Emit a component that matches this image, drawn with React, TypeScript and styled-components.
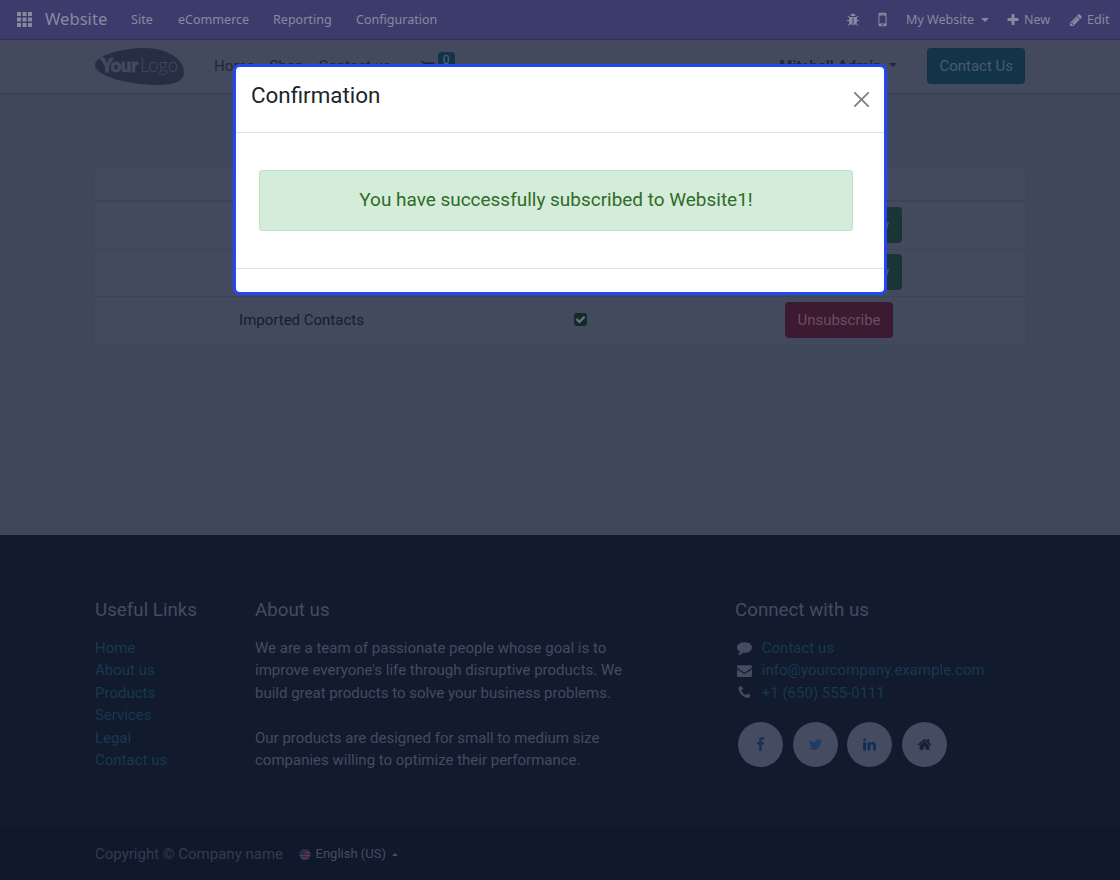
import React from 'react';
import styled, { createGlobalStyle } from 'styled-components';

const GlobalStyle = createGlobalStyle`
  * { box-sizing: border-box; }
  html, body { margin: 0; padding: 0; }
  body {
    width: 1120px;
    height: 880px;
    overflow: hidden;
    background: #3f475a;
    font-family: Roboto, "Liberation Sans", sans-serif;
    font-size: 15px;
    line-height: 22.5px;
    color: #151c30;
  }
`;

const paths = {
  plus: 'M1600 736v192q0 40-28 68t-68 28h-416v416q0 40-28 68t-68 28h-192q-40 0-68-28t-28-68v-416h-416q-40 0-68-28t-28-68v-192q0-40 28-68t68-28h416v-416q0-40 28-68t68-28h192q40 0 68 28t28 68v416h416q40 0 68 28t28 68z',
  pencil: 'M491 1536l91-91-235-235-91 91v107h128v128h107zm523-928q0-22-22-22-10 0-17 7l-542 542q-7 7-7 17 0 22 22 22 10 0 17-7l542-542q7-7 7-17zm-54-192l416 416-832 832h-416v-416zm683 96q0 53-37 90l-166 166-416-416 166-165q36-38 90-38 53 0 91 38l235 234q37 39 37 91z',
  twitter: 'M1684 408q-67 98-162 167 1 14 1 42 0 130-38 259.5t-115.5 248.5-184.5 210.5-258 146-323 54.5q-271 0-496-145 35 4 78 4 225 0 401-138-105-2-188-64.5t-114-159.5q33 5 61 5 43 0 85-11-112-23-185.5-111.5t-73.5-205.5v-4q68 38 146 41-66-44-105-115t-39-154q0-88 44-163 121 149 294.5 238.5t371.5 99.5q-8-38-8-74 0-134 94.5-228.5t228.5-94.5q140 0 236 102 109-21 205-78-37 115-142 178 93-10 186-50z',
  facebook: 'M1343 12v264h-157q-86 0-116 36t-30 108v189h293l-39 296h-254v759h-306v-759h-255v-296h255v-218q0-186 104-288.5t277-102.5q147 0 228 12z',
  linkedin: 'M477 625v991h-330v-991h330zm21-306q1 73-50.5 122t-135.5 49h-2q-82 0-132-49t-50-122q0-74 51.5-122.5t134.5-48.5 133 48.5 51 122.5zm1166 729v568h-329v-530q0-105-40.5-164.5t-126.5-59.5q-63 0-105.5 34.5t-63.5 85.5q-11 30-11 81v553h-329q2-399 2-647t-1-296l-1-48h329v144h-2q20-32 41-56t56.5-52 87-43.5 114.5-15.5q171 0 275 113.5t104 332.5z',
  home: 'M1472 992v480q0 26-19 45t-45 19h-384v-384h-256v384h-384q-26 0-45-19t-19-45v-480q0-1 .5-3t.5-3l575-474 575 474q1 2 1 6zm223-69l-62 74q-8 9-21 11h-3q-13 0-21-7l-692-577-692 577q-12 8-24 7-13-2-21-11l-62-74q-8-10-7-23.5t11-21.5l719-599q32-26 76-26t76 26l244 204v-195q0-14 9-23t23-9h192q14 0 23 9t9 23v408l219 182q10 8 11 21.5t-7 23.5z',
  comment: 'M1792 896q0 174-120 321.5t-326 233-450 85.5q-70 0-145-8-198 175-460 242-49 14-114 22-17 2-30.5-9t-17.5-29v-1q-3-4-.5-12t2-10 4.5-9.5l6-9 7-8.5 8-9q7-8 31-34.5t34.5-38 31-39.5 32.5-51 27-59 26-76q-157-89-247.5-220t-90.5-281q0-130 71-248.5t191-204.5 286-136.5 348-50.5q244 0 450 85.5t326 233 120 321.5z',
  envelope: 'M1792 710v794q0 66-47 113t-113 47h-1472q-66 0-113-47t-47-113v-794q44 49 101 87 362 246 497 345 57 42 92.5 65.5t94.5 48 110 24.5h2q51 0 110-24.5t94.5-48 92.5-65.5q170-123 498-345 57-39 100-87zm0-294q0 79-49 151t-122 123q-376 261-468 325-10 7-42.5 31t-54 38.5-52 32.5-57.5 27-50 9h-2q-23 0-50-9t-57.5-27-52-32.5-54-38.5-42.5-31q-91-64-262-182.5t-205-142.5q-62-42-117-115.5t-55-136.5q0-78 41.5-130t118.5-52h1472q65 0 112.5 47t47.5 113z',
  phone: 'M1600 1240q0 27-10 70.5t-21 68.5q-21 50-122 106-94 51-186 51-27 0-53-3.5t-57.5-12.5-47-14.5-55.5-20.5-49-18q-98-35-175-83-127-79-264-216t-216-264q-48-77-83-175-3-9-18-49t-20.5-55.5-14.5-47-12.5-57.5-3.5-53q0-92 51-186 56-101 106-122 25-11 68.5-21t70.5-10q14 0 21 3 18 6 53 76 11 19 30 54t35 63.5 31 53.5q3 4 17.5 25t21.5 35.5 7 28.5q0 20-28.5 50t-62 55-62 53-28.5 46q0 9 5 22.5t8.5 20.5 14 24 11.5 19q76 137 174 235t235 174q2 1 19 11.5t24 14 20.5 8.5 22.5 5q18 0 46-28.5t53-62 55-62 50-28.5q14 0 28.5 7t35.5 21.5 25 17.5q25 15 53.5 31t63.5 35 54 30q70 35 76 53 3 7 3 21z',
  mobile: 'M976 1408q0-33-23.5-56.5t-56.5-23.5-56.5 23.5-23.5 56.5 23.5 56.5 56.5 23.5 56.5-23.5 23.5-56.5zm208-160v-704q0-13-9.5-22.5t-22.5-9.5h-512q-13 0-22.5 9.5t-9.5 22.5v704q0 13 9.5 22.5t22.5 9.5h512q13 0 22.5-9.5t9.5-22.5zm-192-848q0-16-16-16h-160q-16 0-16 16t16 16h160q16 0 16-16zm288-16v1024q0 52-38 90t-90 38h-512q-52 0-90-38t-38-90v-1024q0-52 38-90t90-38h512q52 0 90 38t38 90z',
  cart: 'M704 1536q0 52-38 90t-90 38-90-38-38-90 38-90 90-38 90 38 38 90zm896 0q0 52-38 90t-90 38-90-38-38-90 38-90 90-38 90 38 38 90zm128-1088v512q0 24-16.5 42.5t-40.5 21.5l-1044 122q13 60 13 70 0 16-24 64h920q26 0 45 19t19 45-19 45-45 19h-1024q-26 0-45-19t-19-45q0-11 8-31.5t16-36 21.5-40 15.5-29.5l-177-823h-204q-26 0-45-19t-19-45 19-45 45-19h256q16 0 28.5 6.5t19.5 15.5 13 24.5 8 26 5.5 29.5 4.5 26h1201q26 0 45 19t19 45z',
  bug: 'M1696 960q0 26-19 45t-45 19h-224q0 171-67 290l208 209q19 19 19 45t-19 45q-18 19-45 19t-45-19l-198-197q-5 5-15 13t-42 28.5-65 36.5-82 29-97 13v-896h-128v896q-51 0-101.5-13.5t-87-33-66-39-43.5-32.5l-15-14-183 207q-20 21-48 21-24 0-43-16-19-18-20.5-44.5t15.5-46.5l202-227q-58-114-58-274h-224q-26 0-45-19t-19-45 19-45 45-19h224v-294l-173-173q-19-19-19-45t19-45 45-19 45 19l173 173h844l173-173q19-19 45-19t45 19 19 45-19 45l-173 173v294h224q26 0 45 19t19 45zm-480-576h-640q0-133 93.5-226.5t226.5-93.5 226.5 93.5 93.5 226.5z',
  check: 'M1671 566q0 40-28 68l-724 724-136 136q-28 28-68 28t-68-28l-136-136-362-362q-28-28-28-68t28-68l136-136q28-28 68-28t68 28l294 295 656-657q28-28 68-28t68 28l136 136q28 28 28 68z',
};

const Icon = ({ name, size = 15 }: { name: keyof typeof paths; size?: number }) => (
  <svg width={size} height={size} viewBox="0 0 1792 1792" fill="currentColor">
    <path d={paths[name]} />
  </svg>
);

const Page = styled.div`
  width: 1120px;
  height: 880px;
  display: flex;
  flex-direction: column;
`;

const AdminBar = styled.header`
  flex: none;
  height: 40px;
  background: #3d3b6c;
  border-bottom: 1px solid #322f6e;
  color: #868a9f;
  font-family: "Noto Sans", sans-serif;
  font-size: 12.55px;
  display: flex;
  justify-content: space-between;
  align-items: center;
  padding: 0 9px 0 17px;
`;

const AdminGroup = styled.div`
  display: flex;
  align-items: center;
`;

const AppName = styled.span`
  font-size: 16.6px;
  margin: 0 25px 0 13px;
  width: 61px;
  white-space: nowrap;
`;

const AdminLink = styled.span<{ $w: number; $gap?: number }>`
  width: ${(p) => p.$w}px;
  margin-right: ${(p) => p.$gap ?? 24}px;
  padding-top: 1px;
  white-space: nowrap;
`;

const AdminIcon = styled.span<{ $gap: number; $before?: number }>`
  display: flex;
  margin-left: ${(p) => p.$before ?? 0}px;
  margin-right: ${(p) => p.$gap}px;
`;

const Caret = styled.i<{ $up?: boolean; $size?: number }>`
  width: 0;
  height: 0;
  border-left: ${(p) => p.$size ?? 4}px solid transparent;
  border-right: ${(p) => p.$size ?? 4}px solid transparent;
  ${(p) => (p.$up ? 'border-bottom' : 'border-top')}: ${(p) => p.$size ?? 4}px solid currentColor;
`;

const SiteNav = styled.nav`
  flex: none;
  height: 53px;
  padding: 0 95px 1px;
  background: #444a5e;
  box-shadow: 0 1px 2px rgba(18, 26, 46, 0.12);
  display: flex;
  align-items: center;
`;

const NavStart = styled.div`
  display: flex;
  margin-left: 29px;
  padding-top: 1px;
`;

const NavLink = styled.span<{ $gap: number }>`
  margin-right: ${(p) => p.$gap}px;
  color: #20273c;
`;

const CartLink = styled.span`
  display: flex;
  position: relative;
  color: #20273c;
  margin-right: auto;
`;

const CartBadge = styled.span`
  position: absolute;
  left: 18px;
  top: -7px;
  width: 17px;
  height: 20px;
  border-radius: 4px;
  background: #133349;
  color: #5a667b;
  font-size: 12px;
  line-height: 17px;
  text-align: center;
`;

const UserMenu = styled.span`
  display: flex;
  align-items: center;
  gap: 8px;
  margin-right: 30px;
  padding-top: 1px;
  font-weight: 700;
  color: #20273c;
`;

const UserCaret = styled(Caret)`
  margin-bottom: 3px;
`;

const tones = {
  teal: ['#133349', '#485b70'],
  green: ['#1b3436', '#4b6266'],
  red: ['#3c1a31', '#6a4d65'],
};

const Button = styled.span<{ $tone: keyof typeof tones }>`
  height: 36px;
  padding: 0 12px;
  border-radius: 4px;
  display: inline-flex;
  align-items: center;
  background: ${(p) => tones[p.$tone][0]};
  color: ${(p) => tones[p.$tone][1]};
`;

const SubscribeButton = styled(Button)`
  padding: 0 12.8px;
`;

const Main = styled.main`
  flex: none;
  height: 442px;
  padding: 76px 95px 0;
`;

const Row = styled.div<{ $h: number; $line?: number }>`
  height: ${(p) => p.$h}px;
  padding-bottom: ${(p) => (p.$h === 47 ? 2 : 1)}px;
  display: grid;
  grid-template-columns: 412px 146px 372px;
  align-items: center;
  justify-items: center;
  background: #444a5e;
  border-bottom: ${(p) => p.$line ?? 1}px solid #3b4458;
`;

const ListName = styled.span`
  padding: 1px 0 0 1px;
`;

const CheckBox = styled.span`
  width: 13px;
  height: 13px;
  margin-bottom: 1px;
  border-radius: 3px;
  background: #142b25;
  color: #667084;
  display: flex;
  align-items: center;
  justify-content: center;
`;

const Footer = styled.footer`
  flex: none;
  height: 291px;
  padding: 63.7px 95px 0;
  background: #121a2e;
  color: #454b60;
  display: grid;
  grid-template-columns: 160px 480px 290px;
  align-content: start;
`;

const FooterTitle = styled.h5`
  margin: 0 0 15.4px;
  font-size: 18.75px;
  line-height: 22.5px;
  font-weight: 400;
`;

const FooterLink = styled.div`
  color: #17394e;
`;

const Paragraph = styled.p`
  margin: 0 0 22.5px;
  white-space: nowrap;
`;

const ContactRow = styled.div`
  display: grid;
  grid-template-columns: 19px 1fr;
  column-gap: 7.8px;
  align-items: center;
  justify-items: center;
`;

const ContactText = styled.span`
  justify-self: start;
  color: #17394e;
`;

const Socials = styled.div`
  display: flex;
  gap: 9.7px;
  margin: 17.9px 0 0 3px;
`;

const Social = styled.span<{ $color: string }>`
  width: 45px;
  height: 45px;
  border-radius: 50%;
  background: #454b60;
  color: ${(p) => p.$color};
  display: flex;
  align-items: center;
  justify-content: center;
`;

const Copyright = styled.div`
  flex: 1;
  padding: 2px 95px 0;
  background: #10182b;
  color: #343b50;
  display: flex;
  align-items: center;
`;

const Language = styled.span`
  display: flex;
  align-items: center;
  margin-left: 16px;
  padding-top: 1px;
  font-size: 13px;
  color: #474d61;
`;

const LanguageName = styled.span`
  margin: 0 6px 0 4.5px;
`;

const Modal = styled.section`
  position: absolute;
  left: 233px;
  top: 64px;
  width: 654px;
  height: 231px;
  background: #fff;
  border: 3px solid #2148f5;
  border-radius: 7px;
  color: #212529;
  display: flex;
  flex-direction: column;
`;

const ModalHeader = styled.div`
  height: 66px;
  padding: 15px 15px 0 15px;
  border-bottom: 1px solid #dee2e6;
  display: flex;
  justify-content: space-between;
`;

const ModalTitle = styled.h4`
  margin: 0;
  font-size: 22.4px;
  line-height: 27px;
  font-weight: 400;
`;

const CloseIcon = styled.svg`
  margin-top: 10px;
`;

const ModalBody = styled.div`
  height: 136px;
  padding: 37px 31px 0 23px;
  border-bottom: 1px solid #dee2e6;
`;

const Alert = styled.div`
  height: 61px;
  border: 1px solid #b9e5c2;
  border-radius: 3px;
  background: #d4edda;
  color: #306b27;
  font-size: 18.97px;
  line-height: 58px;
  text-align: center;
`;

const Logo = () => (
  <svg width="90" height="38" viewBox="0 0 90 38">
    <path
      d="M0 18C0 9 25 1 50 1C73 1 89 13 89 25C89 34 79 38 64 38C34 38 0 29 0 18z"
      fill="#272e43"
    />
    <path d="M4 10.200h5l2.500 4.500-3 1.500z" fill="#444a5e" />
    <text x="6" y="24.500" fontFamily="Lato" fontWeight="900" fontSize="19" fill="#444a5e" stroke="#444a5e" strokeWidth="0.800" textLength="37" lengthAdjust="spacingAndGlyphs">Your</text>
    <text x="45" y="24.500" fontFamily="Lato" fontWeight="300" fontSize="20" fill="#444a5e" textLength="38" lengthAdjust="spacingAndGlyphs">Logo</text>
  </svg>
);

const GridIcon = () => (
  <svg width="15" height="15" viewBox="0 0 15 15" fill="currentColor">
    {[0, 5.5, 11].map((y) =>
      [0, 5.5, 11].map((x) => <rect key={`${x}-${y}`} x={x} y={y} width="4" height="4" />),
    )}
  </svg>
);

const Flag = () => (
  <svg width="12" height="12" viewBox="0 0 12 12">
    <defs>
      <clipPath id="flag"><circle cx="6" cy="5.500" r="5.500" /></clipPath>
    </defs>
    <g clipPath="url(#flag)">
      <rect width="12" height="12" fill="#4c2840" />
      <path d="M0 3.500h12M0 6.500h12M0 9.500h12" stroke="#474d61" strokeWidth="0.800" />
      <rect width="6" height="6" fill="#1f3150" />
    </g>
  </svg>
);

const footerLinks = ['Home', 'About us', 'Products', 'Services', 'Legal', 'Contact us'];

export default function App() {
  return (
    <>
      <GlobalStyle />
      <Page>
        <AdminBar>
          <AdminGroup>
            <GridIcon />
            <AppName>Website</AppName>
            <AdminLink $w={23}>Site</AdminLink>
            <AdminLink $w={71}>eCommerce</AdminLink>
            <AdminLink $w={59}>Reporting</AdminLink>
            <AdminLink $w={82}>Configuration</AdminLink>
          </AdminGroup>
          <AdminGroup>
            <AdminIcon $gap={13}><Icon name="bug" size={14} /></AdminIcon>
            <AdminIcon $gap={14}><Icon name="mobile" size={19} /></AdminIcon>
            <AdminLink $w={70} $gap={5}>My Website</AdminLink>
            <Caret $size={4.5} />
            <AdminIcon $before={17} $gap={4}><Icon name="plus" size={14} /></AdminIcon>
            <AdminLink $w={27} $gap={18}>New</AdminLink>
            <AdminIcon $gap={4}><Icon name="pencil" size={14} /></AdminIcon>
            <AdminLink $w={24} $gap={0}>Edit</AdminLink>
          </AdminGroup>
        </AdminBar>

        <SiteNav>
          <Logo />
          <NavStart>
            <NavLink $gap={15}>Home</NavLink>
            <NavLink $gap={15}>Shop</NavLink>
            <NavLink $gap={29}>Contact us</NavLink>
          </NavStart>
          <CartLink>
            <Icon name="cart" size={15} />
            <CartBadge>0</CartBadge>
          </CartLink>
          <UserMenu>Mitchell Admin <UserCaret $size={4.5} /></UserMenu>
          <Button $tone="teal">Contact Us</Button>
        </SiteNav>

        <Main>
          <Row $h={33} $line={2} />
          <Row $h={48}>
            <span />
            <span />
            <SubscribeButton $tone="green">Subscribe Now</SubscribeButton>
          </Row>
          <Row $h={47}>
            <span />
            <span />
            <SubscribeButton $tone="green">Subscribe Now</SubscribeButton>
          </Row>
          <Row $h={48}>
            <ListName>Imported Contacts</ListName>
            <CheckBox><Icon name="check" size={11} /></CheckBox>
            <Button $tone="red">Unsubscribe</Button>
          </Row>
        </Main>

        <Footer>
          <div>
            <FooterTitle>Useful Links</FooterTitle>
            {footerLinks.map((l) => <FooterLink key={l}>{l}</FooterLink>)}
          </div>
          <div>
            <FooterTitle>About us</FooterTitle>
            <Paragraph>
              We are a team of passionate people whose goal is to<br />
              improve everyone's life through disruptive products. We<br />
              build great products to solve your business problems.
            </Paragraph>
            <Paragraph>
              Our products are designed for small to medium size<br />
              companies willing to optimize their performance.
            </Paragraph>
          </div>
          <div>
            <FooterTitle>Connect with us</FooterTitle>
            <ContactRow><Icon name="comment" /><ContactText>Contact us</ContactText></ContactRow>
            <ContactRow><Icon name="envelope" /><ContactText>info@yourcompany.example.com</ContactText></ContactRow>
            <ContactRow><Icon name="phone" /><ContactText>+1 (650) 555-0111</ContactText></ContactRow>
            <Socials>
              <Social $color="#1d2f55"><Icon name="facebook" /></Social>
              <Social $color="#1d3c68"><Icon name="twitter" /></Social>
              <Social $color="#112c55"><Icon name="linkedin" /></Social>
              <Social $color="#182035"><Icon name="home" /></Social>
            </Socials>
          </div>
        </Footer>

        <Copyright>
          Copyright © Company name
          <Language>
            <Flag />
            <LanguageName>English (US)</LanguageName>
            <Caret $up $size={3.9} />
          </Language>
        </Copyright>
      </Page>

      <Modal>
        <ModalHeader>
          <ModalTitle>Confirmation</ModalTitle>
          <CloseIcon width="15" height="15" viewBox="0 0 15 15" fill="none" stroke="#7f7f7f" strokeWidth="1.800" strokeLinecap="round">
            <path d="M.8.8l13.400 13.400M14.200.8L.8 14.200" />
          </CloseIcon>
        </ModalHeader>
        <ModalBody>
          <Alert>You have successfully subscribed to Website1!</Alert>
        </ModalBody>
      </Modal>
    </>
  );
}
